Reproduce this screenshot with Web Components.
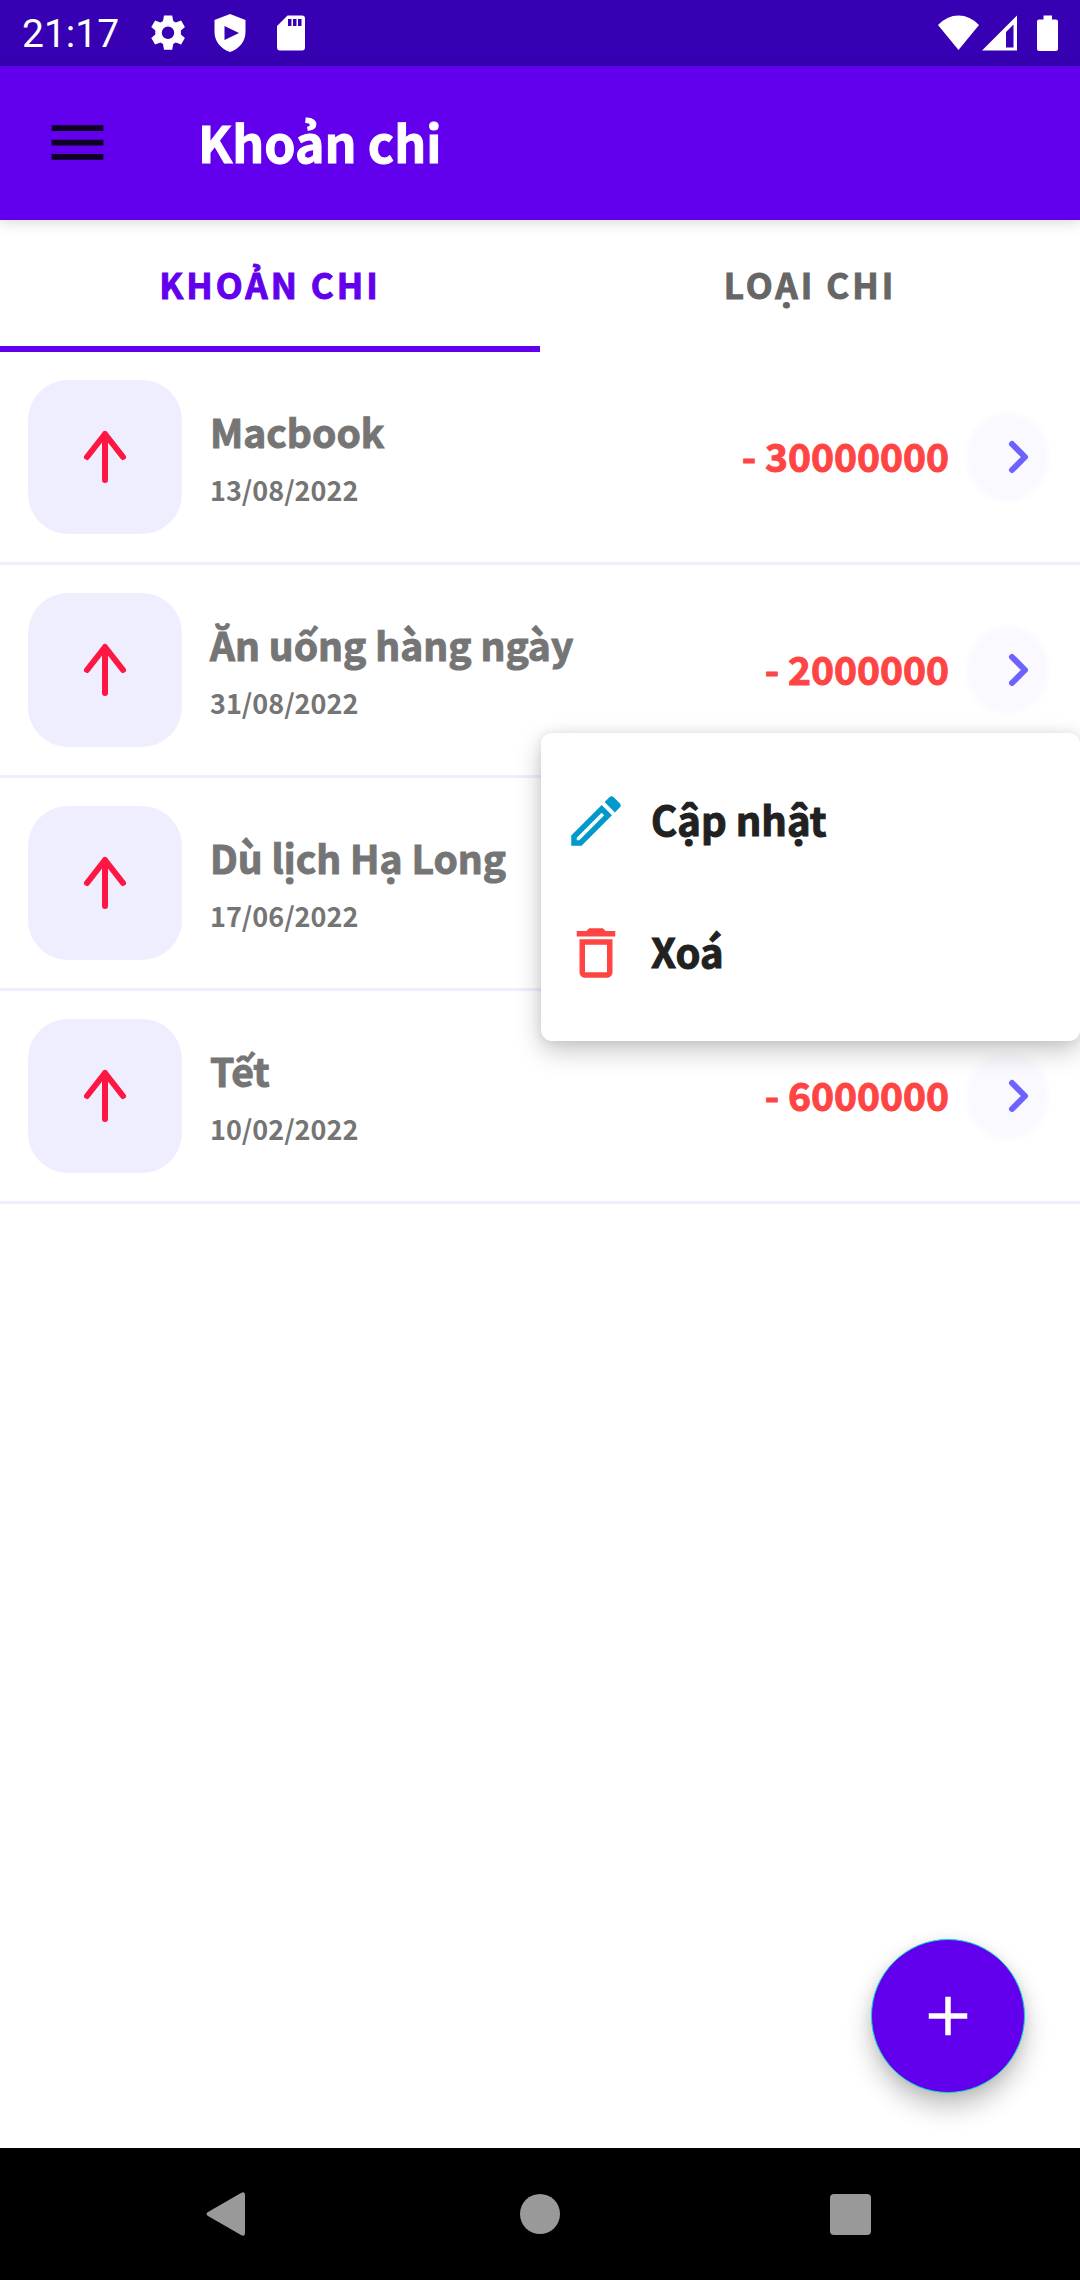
<!DOCTYPE html>
<html lang="vi">
<head>
<meta charset="utf-8">
<meta name="viewport" content="width=device-width, initial-scale=1">
<title>Khoản chi</title>
<style>
  html, body { margin: 0; height: 100%; }
  body {
    font-family: "Noto Sans CJK SC", "Noto Sans", sans-serif;
    font-weight: 700;
    -webkit-text-stroke: 1px currentColor;
    background: #fff;
    --primary: #6200ee;
    --primary-dark: #3700b3;
    --tint: #efeeff;
    --danger: #ff4444;
    --muted: #757575;
  }
</style>
</head>
<body>
<expense-app></expense-app>

<template id="status-bar">
  <style>
    :host { display: flex; align-items: center; justify-content: space-between; height: 66px; padding: 0 22px; box-sizing: border-box; background: var(--primary-dark); color: #fff; -webkit-text-stroke: 0; }
    time { padding-top: 2px; font: 400 39px/64px Roboto, sans-serif; }
    div { display: flex; align-items: center; }
    .left { gap: 24px; }
    svg { display: block; fill: currentColor; }
    .left svg { width: 38px; height: 38px; }
    .left time { margin-right: 6px; }
    .right { gap: 3px; }
    .right svg { height: 38px; }
    .battery { margin-left: 17px; }
  </style>
  <div class="left">
    <time>21:17</time>
    <svg viewBox="0 0 38 38"><path fill-rule="evenodd" d="M15 1.500h8.200l1 5.500 2.600 1.500 5.300-2 3.800 6.500-4 3.500v4l4 3.500-3.800 6.500-5.300-2-2.600 1.500-1 5.700H15l-1-5.700-2.600-1.500-5.300 2L2.300 24l4-3.500v-4l-4-3.500 3.800-6.500 5.300 2L14 7zM19 12.500a6 6 0 1 0 0 12.500a6 6 0 1 0 0-12.500z"/></svg>
    <svg viewBox="0 0 38 38"><path fill-rule="evenodd" d="M19 0l15.500 6v12c0 9.500-6.500 17-15.500 20C10 35 3.500 27.500 3.500 18V6zM13.500 12v14L28 19z"/></svg>
    <svg viewBox="0 0 38 38"><path fill-rule="evenodd" d="M14.500 1.500h14.500a3 3 0 0 1 3 3v29a3 3 0 0 1-3 3h-22a3 3 0 0 1-3-3V12zM15 5v7h3.500V5zM20 5v7h3.500V5zM25 5v7h3.500V5z"/></svg>
  </div>
  <div class="right">
    <svg viewBox="0 0 41 38" width="41"><path d="M0 11Q9 1.500 20.500 1.500T41 11L20.500 36z"/></svg>
    <svg viewBox="0 0 35 38" width="35"><path fill-rule="evenodd" d="M35 1.500v35H0zM24 18v15.500h7.500V10.500z"/></svg>
    <svg class="battery" viewBox="0 0 21 38" width="21"><path d="M6.500 1.500h8.500V5.500h4a2 2 0 0 1 2 2V35a2 2 0 0 1-2 2H2a2 2 0 0 1-2-2V7.500a2 2 0 0 1 2-2h4.500z"/></svg>
  </div>
</template>

<template id="app-bar">
  <style>
    :host { display: flex; align-items: center; gap: 44px; height: 154px; background: var(--primary); color: #fff; box-shadow: 0 2px 14px rgba(0,0,0,.16); position: relative; z-index: 1; }
    button { width: 154px; height: 154px; border: 0; padding: 0 0 2px; background: none; display: grid; place-items: center; }
    svg { width: 69px; height: 69px; fill: #0d0020; }
    h1 { margin: 0; padding-bottom: 4px; font-size: 50px; line-height: 70px; font-weight: 700; }
  </style>
  <button aria-label="Menu"><svg viewBox="0 0 24 24"><path d="M3 18h18v-2H3v2zm0-5h18v-2H3v2zm0-7v2h18V6H3z"/></svg></button>
  <h1><slot></slot></h1>
</template>

<template id="tab-strip">
  <style>
    :host { display: flex; height: 132px; }
    ::slotted(tab-item) { flex: 1; }
  </style>
  <slot></slot>
</template>

<template id="tab-item">
  <style>
    :host { display: flex; }
    button { flex: 1; border: 0; border-bottom: 6px solid transparent; padding: 2px 0 0; background: none; color: #666; font: inherit; font-size: 35px; line-height: 50px; letter-spacing: 3px; text-transform: uppercase; }
    :host([selected]) button { color: var(--primary); border-color: var(--primary); }
  </style>
  <button role="tab"><slot></slot></button>
</template>

<template id="expense-row">
  <style>
    :host { display: flex; align-items: center; gap: 28px; padding: 28px; border-bottom: 3px solid var(--tint); position: relative; }
    .badge { width: 154px; height: 154px; border-radius: 40px; background: var(--tint); display: grid; place-items: center; }
    .badge svg { width: 44px; height: 54px; stroke: #ff1744; stroke-width: 6; }
    svg { display: block; fill: none; stroke-linecap: round; stroke-linejoin: round; }
    .text { flex: 1; padding-top: 8px; color: var(--muted); }
    h2 { margin: 0; font-size: 39px; line-height: 58px; font-weight: 700; }
    time { display: block; font-size: 27px; line-height: 60px; -webkit-text-stroke: 0; }
    .amount { padding-bottom: 4px; color: var(--danger); font-size: 39px; line-height: 56px; }
    .go { width: 89px; height: 96px; margin-left: -14px; border: 0; border-radius: 50%; padding: 0 0 0 22px; background: radial-gradient(closest-side, #faf9ff 84%, #fff); display: grid; place-items: center; }
    .go svg { width: 22px; height: 34px; stroke: #6c63ff; stroke-width: 6; }
    ::slotted(popup-menu) { position: absolute; top: 168px; right: 0; width: calc(50% - 1px); z-index: 2; }
  </style>
  <span class="badge"><svg viewBox="0 0 44 54"><path d="M22 50V4M4 27L22 4L40 27"/></svg></span>
  <div class="text"><h2></h2><time></time></div>
  <span class="amount"></span>
  <button class="go" aria-label="Tùy chọn"><svg viewBox="0 0 22 34"><path d="M4 4L17 17L4 30"/></svg></button>
  <slot></slot>
</template>

<template id="popup-menu">
  <style>
    :host { display: block; box-sizing: border-box; padding: 22px 0; border-radius: 11px; background: #fff; box-shadow: 0 10px 26px rgba(0,0,0,.22), 0 0 12px rgba(0,0,0,.08); }
  </style>
  <slot></slot>
</template>

<template id="menu-option">
  <style>
    :host { display: block; }
    button { display: flex; align-items: center; gap: 22px; width: 100%; height: 132px; padding: 0 22px; border: 0; background: none; color: #212121; font: inherit; font-size: 40px; line-height: 56px; text-align: left; }
    span { padding-bottom: 4px; }
    ::slotted(svg) { width: 66px; height: 66px; }
  </style>
  <button><slot name="icon"></slot><span><slot></slot></span></button>
</template>

<template id="add-button">
  <style>
    :host { display: block; }
    button { width: 154px; height: 154px; border: 1px solid #03dac5; border-radius: 50%; padding: 0; background: var(--primary); box-shadow: 0 14px 26px rgba(0,0,0,.24), 0 2px 12px rgba(0,0,0,.08); display: grid; place-items: center; }
    svg { width: 66px; height: 66px; fill: #fff; }
  </style>
  <button aria-label="Thêm"><svg viewBox="0 0 24 24"><path d="M19 13h-6v6h-2v-6H5v-2h6V5h2v6h6v2z"/></svg></button>
</template>

<template id="nav-bar">
  <style>
    :host { display: flex; align-items: center; justify-content: space-around; height: 132px; padding: 0 70px; background: #000; }
    button { border: 0; padding: 0; background: none; width: 66px; height: 66px; }
    svg { display: block; width: 66px; height: 66px; fill: #999; }
  </style>
  <button aria-label="Quay lại"><svg viewBox="0 0 66 66"><path d="M14 31L47 12q4-2 4 2V52q0 4-4 2L14 35q-3-2 0-4z"/></svg></button>
  <button aria-label="Trang chủ"><svg viewBox="0 0 66 66"><circle cx="33" cy="33" r="20"/></svg></button>
  <button aria-label="Gần đây"><svg viewBox="0 0 66 66"><rect x="10" y="13" width="41" height="41" rx="4"/></svg></button>
</template>

<template id="expense-app">
  <style>
    :host { display: flex; flex-direction: column; min-height: 100vh; }
    main { flex: 1; }
    footer { display: flex; justify-content: flex-end; padding: 55px; }
  </style>
  <status-bar></status-bar>
  <app-bar>Khoản chi</app-bar>
  <tab-strip role="tablist">
    <tab-item selected>Khoản chi</tab-item>
    <tab-item>Loại chi</tab-item>
  </tab-strip>
  <main>
    <expense-row name="Macbook" date="13/08/2022" amount="- 30000000"></expense-row>
    <expense-row name="Ăn uống hàng ngày" date="31/08/2022" amount="- 2000000">
      <popup-menu>
        <menu-option><svg slot="icon" viewBox="0 0 24 24" fill="#0099cc"><path d="M14.060 9.020l.92.92L5.920 19H5v-.92l9.060-9.060M17.660 3c-.25 0-.51.1-.7.29l-1.830 1.830 3.750 3.750 1.830-1.830c.39-.39.39-1.020 0-1.410l-2.340-2.340c-.2-.2-.45-.29-.71-.29zm-3.600 3.190L3 17.250V21h3.750L17.810 9.940l-3.750-3.750z"/></svg>Cập nhật</menu-option>
        <menu-option><svg slot="icon" viewBox="0 0 24 24" fill="#ff4444"><path d="M6 19c0 1.100.9 2 2 2h8c1.100 0 2-.9 2-2V7H6v12zM8 9h8v10H8V9zm7.500-5l-1-1h-5l-1 1H5v2h14V4h-3.500z"/></svg>Xoá</menu-option>
      </popup-menu>
    </expense-row>
    <expense-row name="Dù lịch Hạ Long" date="17/06/2022" amount="- 5000000"></expense-row>
    <expense-row name="Tết" date="10/02/2022" amount="- 6000000"></expense-row>
  </main>
  <footer><add-button></add-button></footer>
  <nav-bar></nav-bar>
</template>

<script>
  class TemplateElement extends HTMLElement {
    constructor() {
      super();
      const template = document.getElementById(this.localName);
      this.attachShadow({ mode: "open" }).append(template.content.cloneNode(true));
    }
  }

  class ExpenseRow extends TemplateElement {
    connectedCallback() {
      this.shadowRoot.querySelector("h2").textContent = this.getAttribute("name");
      this.shadowRoot.querySelector("time").textContent = this.getAttribute("date");
      this.shadowRoot.querySelector(".amount").textContent = this.getAttribute("amount");
    }
  }

  class TabItem extends TemplateElement {
    connectedCallback() {
      this.shadowRoot.querySelector("button").setAttribute("aria-selected", this.hasAttribute("selected"));
    }
  }

  customElements.define("status-bar", class extends TemplateElement {});
  customElements.define("app-bar", class extends TemplateElement {});
  customElements.define("tab-strip", class extends TemplateElement {});
  customElements.define("tab-item", TabItem);
  customElements.define("popup-menu", class extends TemplateElement {});
  customElements.define("menu-option", class extends TemplateElement {});
  customElements.define("expense-row", ExpenseRow);
  customElements.define("add-button", class extends TemplateElement {});
  customElements.define("nav-bar", class extends TemplateElement {});
  customElements.define("expense-app", class extends TemplateElement {});
</script>
</body>
</html>
